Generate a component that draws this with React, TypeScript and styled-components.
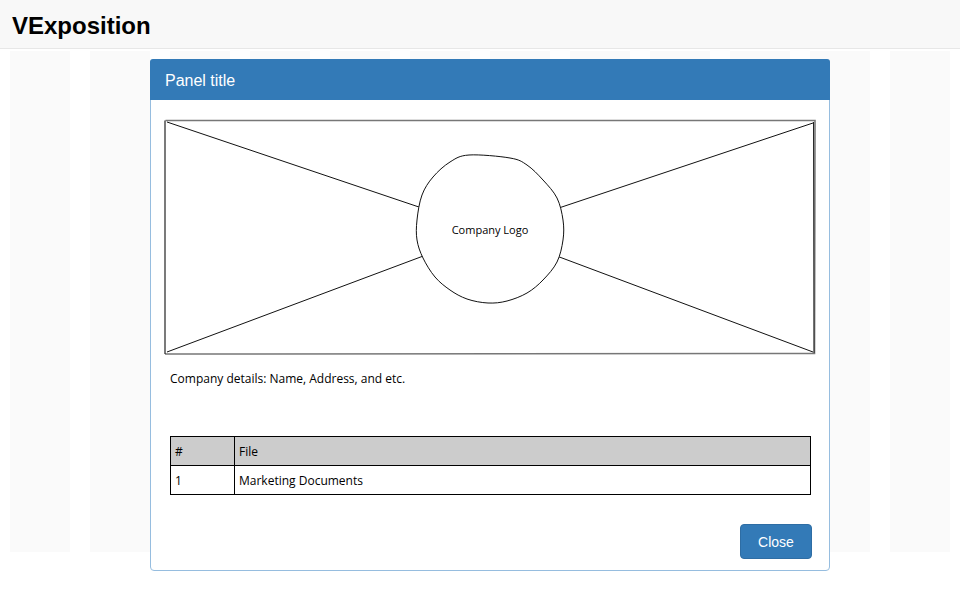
import React from "react";
import styled, { createGlobalStyle } from "styled-components";

const Global = createGlobalStyle`
  html, body { margin: 0; padding: 0; background: #fff; }
  body { font-family: "Liberation Sans", Arial, sans-serif; width: 960px; height: 600px; overflow: hidden; }
`;

const Page = styled.div`
  position: relative;
  width: 960px;
  height: 600px;
`;

const NavBar = styled.header`
  height: 49px;
  box-sizing: border-box;
  background: #f8f8f8;
  border-bottom: 1px solid #e7e7e7;
  display: flex;
  align-items: center;
  padding: 3px 12px 0;
`;

const Brand = styled.h1`
  margin: 0;
  font-size: 24px;
  font-weight: bold;
  color: #000;
  line-height: 1;
`;

const Columns = styled.div`
  display: grid;
  grid-template-columns: repeat(12, 60px);
  column-gap: 20px;
  padding: 2px 10px 0;
  height: 501px;
`;

const Column = styled.div`
  background: #fafafa;
`;

const Modal = styled.section`
  position: absolute;
  left: 150px;
  top: 59px;
  width: 680px;
  height: 512px;
  box-sizing: border-box;
  border: 1px solid #96bddf;
  border-radius: 4px;
  background: #fff;
  display: flex;
  flex-direction: column;
`;

const ModalHeader = styled.div`
  height: 41px;
  box-sizing: border-box;
  background: #337ab7;
  border-radius: 3px 3px 0 0;
  display: flex;
  align-items: center;
  padding: 2px 15px 0;
  color: #fff;
  font-size: 16px;
  margin: -1px -1px 0;
`;

const ModalBody = styled.div`
  flex: 1;
  display: flex;
  flex-direction: column;
  padding: 19px 14px 11px;
`;

const Sketch = styled.svg`
  display: block;
  width: 652px;
  height: 236px;
  margin-left: -1px;
`;

const Details = styled.p`
  margin: 16px 0 0 5px;
  font-family: "Comic Sans MS", "Open Sans", sans-serif;
  font-size: 12px;
  color: #000;
  line-height: 16px;
`;

const Table = styled.table`
  margin: 49px 0 0 5px;
  width: 641px;
  border-collapse: collapse;
  font-family: "Comic Sans MS", "Open Sans", sans-serif;
  font-size: 12px;
  color: #000;
`;

const HeadCell = styled.th<{ $w?: number }>`
  background: #cccccc;
  border: 1px solid #000;
  height: 29px;
  padding: 1px 4px 0;
  text-align: left;
  font-weight: normal;
  width: ${(p) => (p.$w ? `${p.$w}px` : "auto")};
  box-sizing: border-box;
`;

const Cell = styled.td`
  border: 1px solid #000;
  height: 29px;
  padding: 1px 4px 0;
  box-sizing: border-box;
`;

const Footer = styled.div`
  margin-top: auto;
  display: flex;
  justify-content: flex-end;
  padding-right: 3px;
`;

const Button = styled.button`
  width: 72px;
  height: 35px;
  background: #337ab7;
  border: 1px solid #2e6da4;
  border-radius: 4px;
  color: #fff;
  font-family: "Liberation Sans", Arial, sans-serif;
  font-size: 14px;
  cursor: pointer;
`;

type P = [number, number];
const pts: P[] = [
  [469, 155], [510, 158], [527, 165], [543, 180], [557, 198], [563, 220],
  [563, 240], [557, 262], [543, 280], [527, 293], [507, 301], [488, 303],
  [467, 299], [450, 290], [435, 277], [423, 258], [417, 240], [417, 220],
  [422, 195], [433, 177], [450, 162],
].map(([x, y]) => [x - 164, y - 119] as P);

function smooth(p: P[]): string {
  const n = p.length;
  let d = `M${p[0][0]},${p[0][1]}`;
  for (let i = 0; i < n; i++) {
    const p0 = p[(i - 1 + n) % n];
    const p1 = p[i];
    const p2 = p[(i + 1) % n];
    const p3 = p[(i + 2) % n];
    const c1x = p1[0] + (p2[0] - p0[0]) / 6;
    const c1y = p1[1] + (p2[1] - p0[1]) / 6;
    const c2x = p2[0] - (p3[0] - p1[0]) / 6;
    const c2y = p2[1] - (p3[1] - p1[1]) / 6;
    d += ` C${c1x.toFixed(1)},${c1y.toFixed(1)} ${c2x.toFixed(1)},${c2y.toFixed(1)} ${p2[0]},${p2[1]}`;
  }
  return d + "Z";
}

const LogoSketch = () => (
  <Sketch viewBox="0 0 652 236">
    <path d="M1.5,1.5 L651,1.5 L650.5,234.5 L1,235" fill="none" stroke="#777" strokeWidth="1.6" />
    <path d="M1,1.5 L1,235" fill="none" stroke="#222" strokeWidth="1.2" />
    <path d="M649.5,3 L650,234" fill="none" stroke="#222" strokeWidth="1" />
    <g stroke="#111" strokeWidth="1" fill="none">
      <line x1="3" y1="3" x2="326" y2="112" />
      <line x1="649" y1="4" x2="326" y2="112" />
      <line x1="3" y1="233" x2="326" y2="112" />
      <line x1="649" y1="233" x2="326" y2="112" />
    </g>
    <path d={smooth(pts)} fill="#fff" stroke="#111" strokeWidth="1" />
    <text
      x="326"
      y="115"
      textAnchor="middle"
      fontFamily="'Comic Sans MS', 'Open Sans', sans-serif"
      fontSize="11"
      fill="#000"
    >
      Company Logo
    </text>
  </Sketch>
);

export default function App() {
  return (
    <Page>
      <Global />
      <NavBar>
        <Brand>VExposition</Brand>
      </NavBar>
      <Columns>
        {Array.from({ length: 12 }).map((_, i) => (
          <Column key={i} />
        ))}
      </Columns>
      <Modal>
        <ModalHeader>Panel title</ModalHeader>
        <ModalBody>
          <LogoSketch />
          <Details>Company details: Name, Address, and etc.</Details>
          <Table>
            <thead>
              <tr>
                <HeadCell $w={64}>#</HeadCell>
                <HeadCell>File</HeadCell>
              </tr>
            </thead>
            <tbody>
              <tr>
                <Cell>1</Cell>
                <Cell>Marketing Documents</Cell>
              </tr>
            </tbody>
          </Table>
          <Footer>
            <Button>Close</Button>
          </Footer>
        </ModalBody>
      </Modal>
    </Page>
  );
}
